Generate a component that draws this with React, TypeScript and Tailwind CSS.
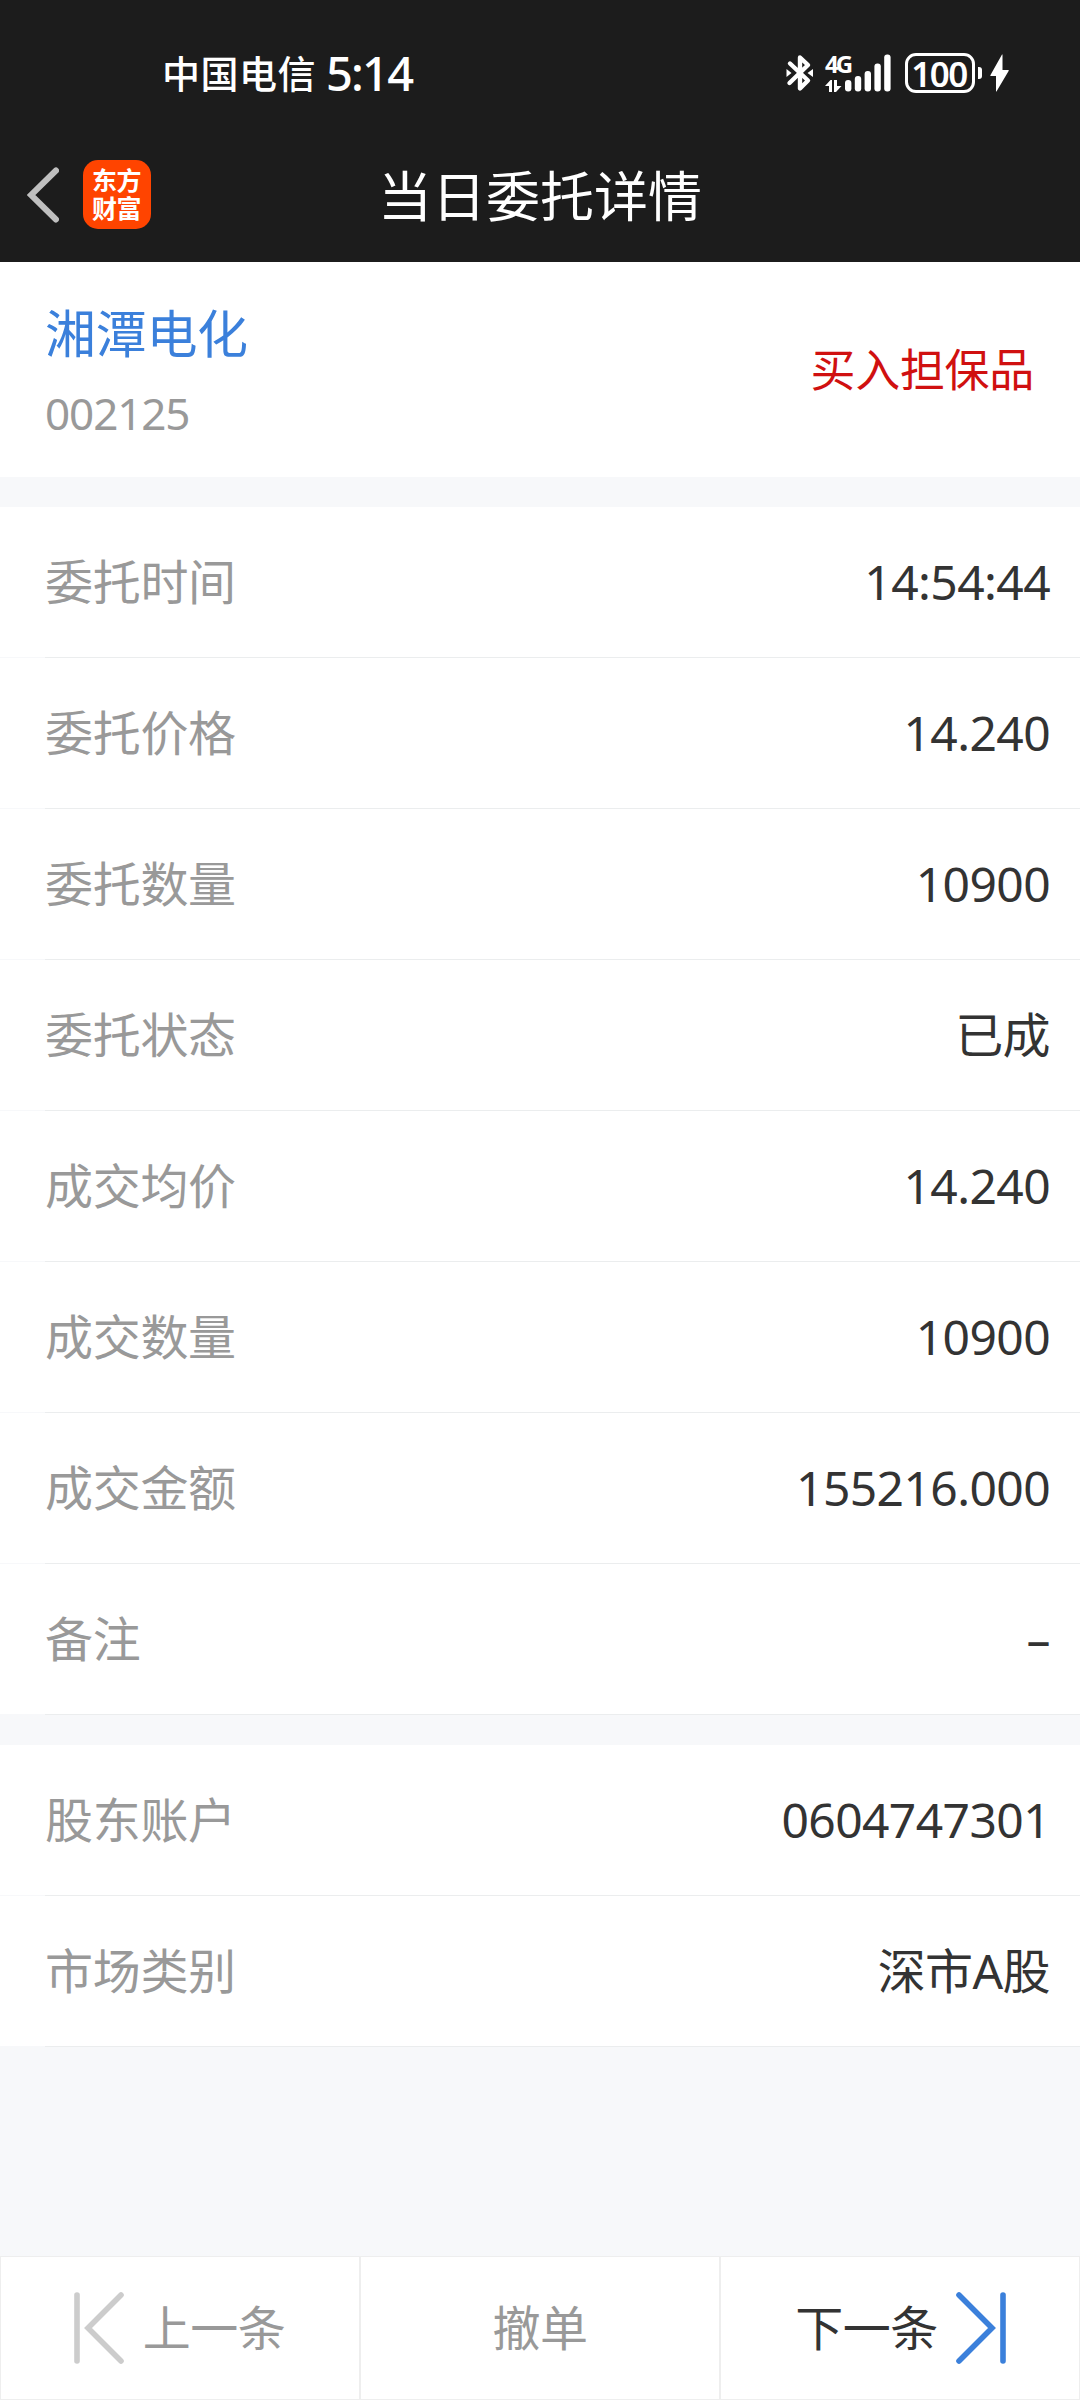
import React from 'react';

interface DetailItem {
  label: string;
  value: string;
}

const orderItems: DetailItem[] = [
  { label: '委托时间', value: '14:54:44' },
  { label: '委托价格', value: '14.240' },
  { label: '委托数量', value: '10900' },
  { label: '委托状态', value: '已成' },
  { label: '成交均价', value: '14.240' },
  { label: '成交数量', value: '10900' },
  { label: '成交金额', value: '155216.000' },
  { label: '备注', value: '–' },
];

const accountItems: DetailItem[] = [
  { label: '股东账户', value: '0604747301' },
  { label: '市场类别', value: '深市A股' },
];

const BluetoothIcon = () => (
  <svg width="28" height="38" viewBox="0 0 28 38" fill="none">
    <path
      d="M4 9.5 L22 26.5 L14 34.5 V3.5 L22 11 L3.5 29"
      stroke="#fff"
      strokeWidth="4.4"
      strokeLinecap="round"
      strokeLinejoin="round"
    />
    <path d="M0.5 15 L5.5 19 L0.5 23 Z M27 15 L21.5 19 L27 23 Z" fill="#fff" />
  </svg>
);

const DataArrowsIcon = () => (
  <svg width="17" height="12" viewBox="0 0 17 12">
    <path d="M0 6 L5.5 0 H7 V12 H4 V6 Z" fill="#fff" />
    <path d="M9 0 H12 V6 H16.5 L11 12 H9 Z" fill="#fff" />
  </svg>
);

const SignalIcon = () => (
  <svg width="46" height="38" viewBox="0 0 46 38" fill="#fff">
    <rect x="0" y="26" width="6.4" height="11.5" rx="3" />
    <rect x="9.8" y="22" width="6.4" height="15.5" rx="3" />
    <rect x="19.6" y="17" width="6.4" height="20.5" rx="3" />
    <rect x="29.4" y="9.5" width="6.4" height="28" rx="3" />
    <rect x="39.2" y="0.5" width="6.4" height="37" rx="3" />
  </svg>
);

const BoltIcon = () => (
  <svg width="19" height="38" viewBox="0 0 19 38">
    <path d="M12.5 0.5 V16 H18.5 Q19 16 18.6 17 L6.5 37.5 H6 V22 H0.6 Q0 22 0.5 21 L12 0.5 Z" fill="#fff" />
  </svg>
);

const StatusBar = () => (
  <div className="flex h-[146px] items-center justify-between pl-[162px] pr-[71px]">
    <div className="flex items-center gap-[10px] font-medium leading-none text-white">
      <span className="text-[38px] tracking-[0.5px]">中国电信</span>
      <span className="text-[47px] tracking-[-1.8px]">5:14</span>
    </div>
    <div className="flex items-center">
      <BluetoothIcon />
      <div className="ml-[11px] flex h-[38px] w-[20px] flex-col justify-between">
        <span className="text-[24px] font-bold leading-[20px] tracking-[-3px] text-white">4G</span>
        <DataArrowsIcon />
      </div>
      <SignalIcon />
      <div className="ml-[14px] flex h-[40px] w-[70px] items-center justify-center rounded-[11px] border-[3px] border-white pr-[2px] text-[35px] font-semibold leading-none tracking-[-1.5px] text-white">
        100
      </div>
      <div className="ml-[3px] h-[12px] w-[4px] rounded-r-[3px] bg-white" />
      <div className="ml-[8px]">
        <BoltIcon />
      </div>
    </div>
  </div>
);

const NavBar = () => (
  <div className="grid h-[116px] grid-cols-[1fr_auto_1fr] items-start px-[27px]">
    <div className="flex items-center gap-[24px] pt-[14px]">
      <svg width="32" height="56" viewBox="0 0 32 56" fill="none">
        <path d="M29 3.5 L4 28 L29 52.5" stroke="#bfbfbf" strokeWidth="6" strokeLinecap="round" />
      </svg>
      <div className="flex h-[69px] w-[68px] items-center justify-center rounded-[15px] bg-[#ff4400] pb-[2px]">
        <span className="w-[50px] break-all text-[25px] font-bold leading-[28px] tracking-[-0.5px] text-white">东方财富</span>
      </div>
    </div>
    <h1 className="pt-[23px] text-[54px] leading-[54px] text-white">当日委托详情</h1>
    <div />
  </div>
);

const DetailRow: React.FC<DetailItem> = ({ label, value }) => (
  <div>
    <div className="flex h-[150px] items-center justify-between bg-white pb-px pl-[45px] pr-[30px] text-[48px] leading-none">
      <span className="tracking-[-0.3px] text-[#999999]">{label}</span>
      <span className="tracking-[-0.6px] text-[#333333]">{value}</span>
    </div>
    <div className="ml-[45px] h-px bg-[#ebedee]" />
  </div>
);

const BottomBar = () => (
  <div className="grid h-[144px] grid-cols-3 text-[48px] leading-none tracking-[-0.5px]">
    <button className="flex items-center justify-center gap-[19px] border border-[#eeeeee] bg-white pr-px text-[#999999]">
      <svg width="50" height="72" viewBox="0 0 50 72" fill="none" stroke="#cccccc" strokeWidth="5.6" strokeLinecap="round">
        <path d="M3 3 V69" />
        <path d="M47 3 L14 36 L47 69" />
      </svg>
      <span className="pb-px">上一条</span>
    </button>
    <button className="flex items-center justify-center border border-[#eeeeee] bg-white pb-px text-[#999999]">撤单</button>
    <button className="flex items-center justify-center gap-[18px] border border-[#eeeeee] bg-white pl-px text-[#333333]">
      <span className="pb-px">下一条</span>
      <svg width="50" height="72" viewBox="0 0 50 72" fill="none" stroke="#3b80db" strokeWidth="5.6" strokeLinecap="round">
        <path d="M47 3 V69" />
        <path d="M3 3 L36 36 L3 69" />
      </svg>
    </button>
  </div>
);

export default function App() {
  return (
    <div className="flex h-[2400px] w-[1080px] flex-col bg-[#f7f8fa] font-['Noto_Sans','Noto_Sans_CJK_SC',sans-serif]">
      <header className="h-[262px] bg-[#1c1c1c]">
        <StatusBar />
        <NavBar />
      </header>

      <section className="flex h-[215px] items-center justify-between bg-white pl-[45px] pr-[46px]">
        <div className="flex flex-col gap-[32px] pt-[3px]">
          <span className="text-[51px] leading-[51px] tracking-[-0.3px] text-[#3b80db]">湘潭电化</span>
          <span className="text-[44px] leading-[44px] tracking-[-1.1px] text-[#999999]">002125</span>
        </div>
        <span className="text-[45px] leading-none tracking-[-0.3px] text-[#d01010]">买入担保品</span>
      </section>

      <section className="mt-[30px]">
        {orderItems.map((item) => (
          <DetailRow key={item.label} {...item} />
        ))}
      </section>

      <section className="mt-[30px]">
        {accountItems.map((item) => (
          <DetailRow key={item.label} {...item} />
        ))}
      </section>

      <div className="mt-auto">
        <BottomBar />
      </div>
    </div>
  );
}
